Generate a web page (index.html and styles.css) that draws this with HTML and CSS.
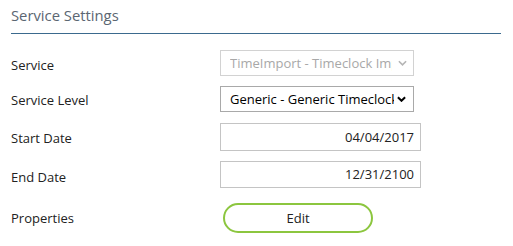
FILE: index.html
```html
<!DOCTYPE html>
<html>
<head>
<meta charset="utf-8">
<link rel="stylesheet" href="styles.css">
</head>
<body>
<div class="panel">
  <h2 class="title">Service Settings</h2>
  <div class="form">
    <div class="row row-service">
      <span class="label">Service</span>
      <div class="select disabled"><span class="select-text">TimeImport - Timeclock Import</span><svg class="chev" viewBox="0 0 10 6" width="9" height="6"><path d="M1 1 L5 5 L9 1" fill="none" stroke="currentColor" stroke-width="1.8"/></svg></div>
    </div>
    <div class="row row-level">
      <span class="label">Service Level</span>
      <div class="select enabled"><span class="select-text">Generic - Generic Timeclock</span><svg class="chev" viewBox="0 0 10 6" width="9" height="6"><path d="M1 1 L5 5 L9 1" fill="none" stroke="currentColor" stroke-width="2.2"/></svg></div>
    </div>
    <div class="row row-start">
      <span class="label">Start Date</span>
      <div class="input">04/04/2017</div>
    </div>
    <div class="row row-end">
      <span class="label">End Date</span>
      <div class="input">12/31/2100</div>
    </div>
    <div class="row row-props">
      <span class="label">Properties</span>
      <div class="btn-wrap"><button class="btn">Edit</button></div>
    </div>
  </div>
</div>
</body>
</html>
```

FILE: styles.css
```css
* { box-sizing: border-box; }
html, body { margin: 0; padding: 0; background: #fff; }
body {
  font-family: "Open Sans", "DejaVu Sans", sans-serif;
  font-size: 13px;
  color: #222;
}
.panel {
  padding: 5px 12px 0 11px;
}
.title {
  margin: 0;
  font-weight: normal;
  font-size: 14.8px;
  color: #5b6672;
  line-height: 21px;
  padding-bottom: 7px;
  border-bottom: 1px solid #3b6a8e;
}
.form {
  display: flex;
  flex-direction: column;
  padding-top: 16px;
}
.row {
  display: grid;
  grid-template-columns: 209px 1fr;
  align-items: start;
}
.label {
  color: #222;
  line-height: 18px;
}
.row-service .label { margin-top: 6px; }
.row-level { margin-top: 10px; }
.row-level .label { margin-top: 5px; }
.row-start { margin-top: 11px; }
.row-start .label { margin-top: 6px; }
.row-end { margin-top: 10px; }
.row-end .label { margin-top: 7px; }
.row-props { margin-top: 15px; }
.row-props .label { margin-top: 6px; }
.select {
  width: 194px;
  height: 26px;
  border: 1px solid #a9a9a9;
  display: flex;
  align-items: center;
  padding: 0 6px 0 9px;
  color: #000;
}
.select.disabled {
  border-color: #d2d2d2;
  color: #a8a8a8;
}
.select-text {
  flex: 1;
  white-space: nowrap;
  overflow: hidden;
  line-height: 18px;
  margin-right: 6px;
}
.select.enabled { padding-right: 7px; }
.select.enabled .select-text { margin-right: 3px; }
.chev { flex: none; color: #000; }
.select.disabled .chev { color: #b5b5b5; }
.input {
  width: 201px;
  height: 28px;
  border: 1px solid #c4c4c4;
  text-align: right;
  padding-right: 6px;
  line-height: 26px;
  color: #222;
}
.row-end .input { height: 27px; line-height: 25px; }
.btn-wrap { padding-left: 3px; }
.btn {
  display: block;
  width: 150px;
  height: 30px;
  border: 2px solid #8cc63f;
  border-radius: 15px;
  background: #fff;
  font-family: "Open Sans", "DejaVu Sans", sans-serif;
  font-size: 13px;
  color: #222;
  padding: 0;
}
```
